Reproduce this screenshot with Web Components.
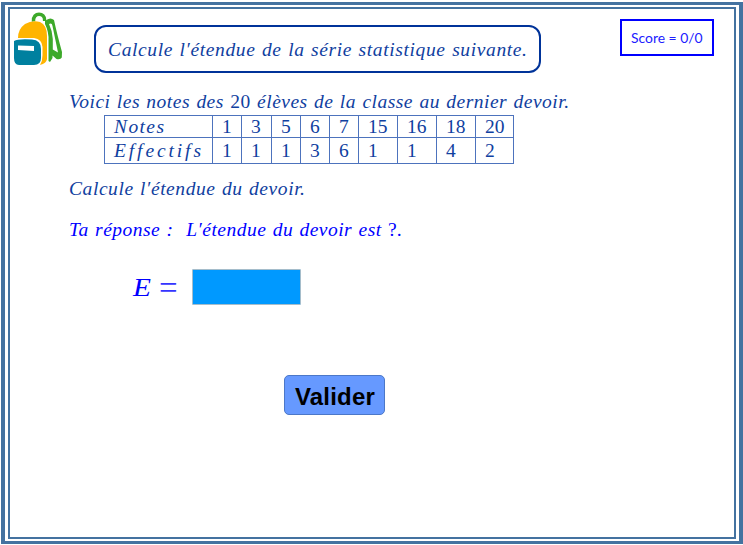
<!DOCTYPE html>
<html lang="fr"><head><meta charset="utf-8"><title>Étendue d'une série statistique</title>
<style>body{margin:0;background:#fff}</style></head>
<body><exercise-page></exercise-page>
<script>
const define = (name, html, setup) => customElements.define(name, class extends HTMLElement {
  constructor(){ super(); this.attachShadow({mode:'open'}).innerHTML = html; }
  connectedCallback(){ if (setup) setup(this); }
});

// A line of italic text whose letter spacing is stretched to a given width; digits and "?" stay upright.
define('math-line', `<style>
:host{display:block;font:italic 19.500px/24px "Liberation Serif",serif;white-space:pre;height:24px}
span{display:inline-block}
i{font-style:normal}
</style><span></span>`, el => {
  const s = el.shadowRoot.querySelector('span'), text = el.getAttribute('text');
  s.innerHTML = text.replace(/(\d+|\?)/g, '<i>$1</i>');
  s.style.wordSpacing = '1px';
  const w = +el.getAttribute('fit');
  if (w) s.style.letterSpacing = (w - s.getBoundingClientRect().width) / (text.length - 1) + 'px';
});

define('back-pack', `<style>:host{display:block;width:50px;height:56px}svg{display:block}</style>
<svg width="50" height="56" viewBox="0 0 50 56">
<path d="M19.5 9.5C19 4.500 22 2.300 25 2.300S31 4 30.700 9" fill="none" stroke="#3da92a" stroke-width="3.500"/>
<path fill="#3da92a" fill-rule="evenodd" d="M31 9Q36 4.500 40 8Q43 22 48 40L47.800 45.500Q46.500 48 42.500 47L38.500 43.500V46L36 50L34.500 49V29Q35 20 31 12ZM35 12Q38 10.500 38.500 14L44 40.500L38.800 37.500V27Q38.500 19 35 12Z"/>
<path fill="#ffb400" d="M4 26Q4 17 11 12Q18 8 26 10Q33 13 33 24V47Q32.500 51.500 26 53Q28.500 49 28.500 43V35Q28 27 20 26Z"/>
<path fill="#00809f" d="M0 29Q4 26.500 18 27.500Q27 28 27 37V46Q27 53 20 53H5Q0 53 0 46Z"/>
<path fill="#fff" d="M4 33.500L20 34V39L4 38Z"/>
</svg>`);

define('title-box', `<style>:host{display:block;box-sizing:border-box;width:447px;height:48px;border:2px solid #039;border-radius:12px;padding:11px 0 0 12px;color:#1040a0}
</style><slot></slot>`);

define('score-box', `<style>:host{display:block;box-sizing:border-box;width:94px;height:37px;border:2px solid #00f;padding:8px 0 0 9px;color:#2020ff;font:13.900px/18px Lato,sans-serif;white-space:nowrap}
</style><slot></slot>`);

define('notes-table', `<style>
:host{display:block;width:410px;color:#1040a0;font:19.500px/22px "Liberation Serif",serif}
table{border-collapse:collapse;table-layout:fixed;width:410px}
td{border:1px solid #4d73bd;padding:0 0 0 9px;white-space:nowrap}
tr:first-child td{height:21px;line-height:21px}tr:last-child td{height:25px;line-height:24px}
math-line{height:21px;line-height:21px}tr:last-child math-line{height:25px;line-height:25px}
</style><table><colgroup></colgroup><tbody></tbody></table>`, el => {
  const r = el.shadowRoot;
  r.querySelector('colgroup').innerHTML = [108,29,30,29,29,29,39,39,39,38].map(w => `<col style="width:${w}px">`).join('');
  r.querySelector('tbody').innerHTML = [['Notes',50,'1 3 5 6 7 15 16 18 20'],['Effectifs',87,'1 1 1 3 6 1 1 4 2']]
    .map(([n,w,v]) => `<tr><td><math-line text="${n}" fit="${w}"></math-line></td>${v.split(' ').map(x => `<td>${x}</td>`).join('')}</tr>`).join('');
});

define('answer-row', `<style>
:host{display:flex;align-items:center;color:#00f;font:italic 26px/36px "Liberation Serif",serif;height:36px}
b{font-weight:400;width:26px;transform:scaleX(1.13);transform-origin:left;margin-top:2px}
u{text-decoration:none;font-style:normal;font-size:33px;width:33px;color:#3535ff;margin-top:1px}
input{display:block;box-sizing:border-box;width:109px;height:36px;background:#09f;border:1px solid #a5bdcb;border-radius:1px;padding:4px;margin:0;font:20px "Liberation Sans"}
</style><b>E</b><u>=</u><input aria-label="E">`);

define('submit-button', `<style>
:host{display:block}
button{display:block;box-sizing:border-box;width:101px;height:40px;background:#69f;border:1px solid #4c78c8;border-radius:5px;padding:4px 0 0 1px;font:bold 24px/34px "Liberation Sans",Arial,sans-serif;letter-spacing:.2px;color:#000}
</style><button><slot></slot></button>`);

define('exercise-page', `<style>
:host{display:block;box-sizing:border-box;width:743px;height:545px;padding:2px 0 1px 1px;overflow:hidden}
.outer{box-sizing:border-box;width:742px;height:542px;border:solid #4472a0;border-width:3px 4px;padding:2px 3px}
.inner{box-sizing:border-box;width:728px;height:532px;border:2px solid #4472a0}
header{display:flex;align-items:flex-start;height:81px}
back-pack{margin:3px 0 0 4px}title-box{margin:16px 0 0 30px}score-box{margin:10px 0 0 79px}
main{padding-left:59px;color:#1040a0}
notes-table{margin:1px 0 0 35px}
.q{margin-top:13px}.a{margin-top:17px;color:#00f}
answer-row{margin:27px 0 0 64px}submit-button{margin:70px 0 0 215px}
</style><div class="outer"><div class="inner">
<header><back-pack></back-pack>
<title-box><math-line text="Calcule l′étendue de la série statistique suivante." fit="419"></math-line></title-box>
<score-box>Score = 0/0</score-box></header>
<main><math-line text="Voici les notes des 20 élèves de la classe au dernier devoir." fit="500"></math-line>
<notes-table></notes-table>
<math-line class="q" text="Calcule l′étendue du devoir." fit="236"></math-line>
<math-line class="a" text="Ta réponse :  L′étendue du devoir est ?." fit="333"></math-line>
<answer-row></answer-row><submit-button>Valider</submit-button></main>
</div></div>`);
</script></body></html>
